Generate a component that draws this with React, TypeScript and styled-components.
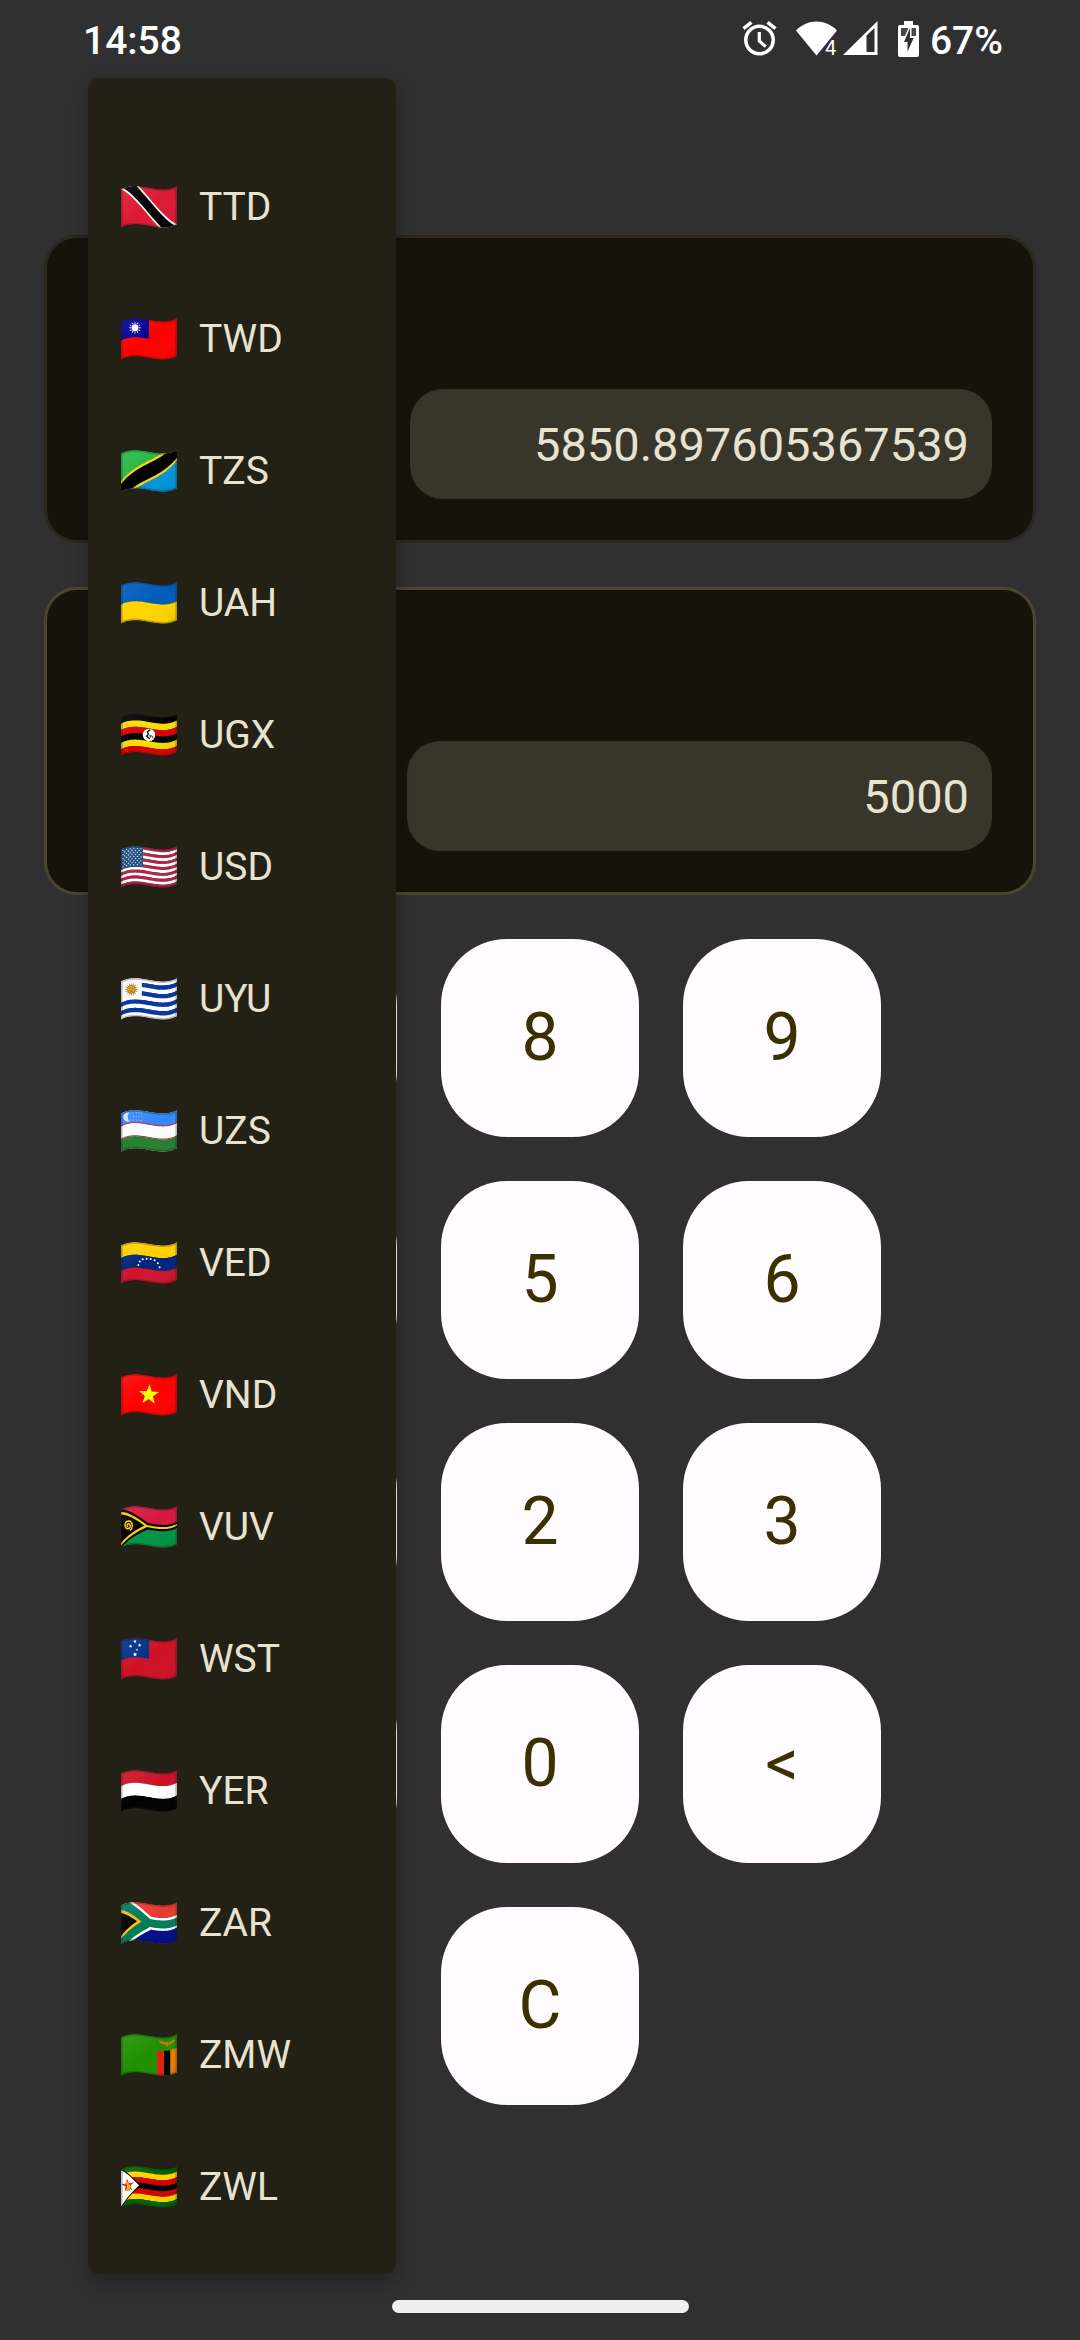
import React, { useState } from "react";
import styled, { createGlobalStyle } from "styled-components";

const color = {
  page: "#303030",
  menu: "#232015",
  card: "#16130b",
  cardEdge: "#2c281e",
  cardEdgeActive: "#4b4530",
  field: "#38352a",
  text: "#e8e2d0",
  key: "#fffbff",
  keyText: "#3a3000",
};

const GlobalStyle = createGlobalStyle`
  * { box-sizing: border-box; }
  html { background: ${color.page}; }
  body { margin: 0; font-family: Roboto, "Noto Sans", sans-serif; }
  button, input { font: inherit; }
`;

const Screen = styled.div`
  position: relative;
  display: flex;
  flex-direction: column;
  min-height: 100vh;
  background: ${color.page};
`;

const StatusBar = styled.header`
  display: flex;
  align-items: center;
  justify-content: space-between;
  height: 78px;
  padding: 0 77px 0 83px;
  color: #fff;
`;

const StatusText = styled.span`
  padding-top: 4px;
  font-size: 39px;
  line-height: 46px;
  font-weight: 500;
`;

const StatusIcons = styled.div`
  display: flex;
  align-items: center;
`;

const StatusIcon = styled.svg<{ $gap: number }>`
  display: block;
  flex: none;
  margin-right: ${(p) => p.$gap}px;
`;

const Main = styled.main`
  display: flex;
  flex-direction: column;
  gap: 44px;
  padding: 157px 44px 44px;
`;

const Card = styled.section<{ $active?: boolean }>`
  display: flex;
  align-items: flex-end;
  gap: 22px;
  min-height: 308px;
  padding: 41px;
  border: 3px solid ${(p) => (p.$active ? color.cardEdgeActive : color.cardEdge)};
  border-radius: 33px;
  background: ${color.card};
`;

const CurrencyPicker = styled.button<{ $width: number }>`
  flex: none;
  width: ${(p) => p.$width}px;
  height: 110px;
  border: 0;
  border-radius: 33px;
  background: ${color.field};
`;

const Amount = styled.input`
  flex: 1;
  min-width: 0;
  height: 110px;
  padding: 0 23px;
  border: 0;
  border-radius: 33px;
  outline: 0;
  background: ${color.field};
  color: ${color.text};
  font-size: 47px;
  line-height: 66px;
  text-align: right;
`;

const Keypad = styled.div`
  display: grid;
  grid-template-columns: repeat(3, 198px);
  justify-content: center;
  gap: 44px;
`;

const Key = styled.button<{ $column?: number }>`
  grid-column: ${(p) => p.$column ?? "auto"};
  height: 198px;
  padding: 0;
  border: 0;
  border-radius: 66px;
  background: ${color.key};
  color: ${color.keyText};
  font-size: 66px;
  line-height: 88px;
`;

const Menu = styled.ul`
  position: absolute;
  top: 78px;
  left: 88px;
  width: 308px;
  margin: 0;
  padding: 63px 0 21px;
  border-radius: 11px;
  background: ${color.menu};
  box-shadow: 0 8px 18px rgba(0, 0, 0, 0.28);
  list-style: none;
`;

const MenuItem = styled.button`
  display: flex;
  align-items: center;
  gap: 22px;
  width: 100%;
  height: 132px;
  padding: 0 33px;
  border: 0;
  background: none;
  color: ${color.text};
  font-size: 39px;
  line-height: 46px;
  text-align: left;
`;

const FlagArt = styled.svg`
  display: block;
  flex: none;
  overflow: visible;
`;

const NavArea = styled.footer`
  display: flex;
  justify-content: center;
  margin-top: auto;
  padding-bottom: 27px;
`;

const HomeHandle = styled.div`
  width: 297px;
  height: 13px;
  border-radius: 7px;
  background: #efefef;
`;

/* ---------- flags: flat shapes bent along a wave ---------- */

const W = 56;
const H = 38.4;
type Pt = [number, number];

const wave = (x: number) => 3.3 - 0.0009 * ((x * x * x) / 3 - 28 * x * x + 588 * x);

const bend = (points: Pt[]) => {
  let d = "";
  points.forEach(([x0, y0], i) => {
    const [x1, y1] = points[(i + 1) % points.length];
    const steps = Math.max(1, Math.ceil(Math.abs(x1 - x0) / 2));
    for (let s = 0; s < steps; s++) {
      const t = s / steps;
      const x = x0 + (x1 - x0) * t;
      const y = y0 + (y1 - y0) * t + wave(x);
      d += `${d ? "L" : "M"}${x.toFixed(2)} ${y.toFixed(2)}`;
    }
  });
  return d + "Z";
};

const Shape = ({ p, c }: { p: Pt[]; c: string }) => <path d={bend(p)} fill={c} />;

const Box = ({ x = 0, y = 0, w = W, h = H, c }: { x?: number; y?: number; w?: number; h?: number; c: string }) => (
  <Shape p={[[x, y], [x + w, y], [x + w, y + h], [x, y + h]]} c={c} />
);

const Stripes = ({ colors }: { colors: string[] }) => (
  <>
    {colors.map((c, i) => (
      <Box key={i} y={(i * H) / colors.length} h={H / colors.length} c={c} />
    ))}
  </>
);

const burst = (cx: number, cy: number, outer: number, inner: number, n: number) =>
  Array.from({ length: n * 2 }, (_, i) => {
    const r = i % 2 ? inner : outer;
    const a = (Math.PI * i) / n - Math.PI / 2;
    return `${(cx + r * Math.cos(a)).toFixed(2)},${(cy + r * Math.sin(a)).toFixed(2)}`;
  }).join(" ");

const Dots = ({ at, r }: { at: Pt[]; r: number }) => (
  <>
    {at.map(([x, y], i) => (
      <circle key={i} cx={x} cy={y + wave(x)} r={r} fill="#fff" />
    ))}
  </>
);

const usStars: Pt[] = Array.from({ length: 9 }).flatMap((_, row) =>
  Array.from({ length: row % 2 ? 5 : 6 }, (_, i): Pt => [2 + i * 3.6 + (row % 2 ? 1.8 : 0), 2.2 + row * 2.05]),
);

const art: Record<string, React.ReactNode> = {
  TTD: (
    <>
      <Box c="#dd1933" />
      <Shape c="#fff" p={[[0, 0], [18, 0], [W, H], [38, H]]} />
      <Shape c="#000" p={[[2.5, 0], [15.5, 0], [53.5, H], [40.5, H]]} />
    </>
  ),
  TWD: (
    <>
      <Box c="#fe0000" />
      <Box w={28} h={19.2} c="#000095" />
      <polygon points={burst(14, 9.8, 6.6, 3.4, 12)} fill="#fff" />
      <circle cx="14" cy="9.8" r="4.1" fill="#000095" />
      <circle cx="14" cy="9.8" r="3.5" fill="#fff" />
    </>
  ),
  TZS: (
    <>
      <Box c="#26b843" />
      <Shape c="#0095da" p={[[W, 0], [W, H], [0, H]]} />
      <Shape c="#fcd116" p={[[0, 28], [41, 0], [W, 0], [W, 10.4], [15, H], [0, H]]} />
      <Shape c="#000" p={[[0, 30.6], [45, 0], [W, 0], [W, 7.8], [11, H], [0, H]]} />
    </>
  ),
  UAH: <Stripes colors={["#005bbb", "#ffd500"]} />,
  UGX: (
    <>
      <Stripes colors={["#000", "#fcdc04", "#d90000", "#000", "#fcdc04", "#d90000"]} />
      <circle cx="28" cy="21" r="6.2" fill="#fff" />
      <path d="M29.4 15.6l-3 2.2 1 2.4-1.8 2 3.2 2.6" fill="none" stroke="#222" strokeWidth="1.5" />
      <path d="M27.5 20.5l3.6 1.2-1.6 2.4z" fill="#555" />
      <path d="M30.4 21.2l2 1.6-.8 2z" fill="#d90000" />
    </>
  ),
  USD: (
    <>
      <Stripes colors={Array.from({ length: 13 }, (_, i) => (i % 2 ? "#fff" : "#b22346"))} />
      <Box w={22} h={20.7} c="#1b4a7e" />
      <Dots at={usStars} r={0.62} />
    </>
  ),
  UYU: (
    <>
      <Stripes colors={Array.from({ length: 9 }, (_, i) => (i % 2 ? "#0038a8" : "#fff"))} />
      <Box w={20.8} h={21.3} c="#fff" />
      <polygon points={burst(10.4, 11.4, 7.4, 3.4, 16)} fill="#a66a12" />
      <circle cx="10.4" cy="11.4" r="3.8" fill="#e0a010" stroke="#a66a12" strokeWidth=".6" />
      <path d="M8.6 10.6h1M11.2 10.6h1M9.2 13h2.4" stroke="#85340a" strokeWidth=".7" />
    </>
  ),
  UZS: (
    <>
      <Box c="#fff" />
      <Box h={12.6} c="#3289fa" />
      <Box y={12.1} h={1} c="#e0142c" />
      <Box y={25.3} h={1} c="#e0142c" />
      <Box y={26.1} h={12.3} c="#278030" />
      <path d="M8.400 2.400a4.800 4.800 0 1 0 0 9.200 7 7 0 0 1 0-9.200z" fill="#cfe4ff" />
      <Dots
        r={0.42}
        at={[[15.5, 2.5], [18, 2.5], [20.5, 2.5], [12.6, 6.2], [15.3, 6.2], [18, 6.2], [20.5, 6.2], [9.8, 10], [12.6, 10], [15.3, 10], [18, 10], [20.5, 10]]}
      />
    </>
  ),
  VED: (
    <>
      <Stripes colors={["#ffcf00", "#00247d", "#cf142b"]} />
      <Dots r={1} at={[[17.4, 22.8], [18.8, 19.2], [21.7, 16.6], [25.6, 15.4], [29.6, 15.1], [33.6, 15.7], [36.8, 18.2], [38.6, 22]]} />
    </>
  ),
  VND: (
    <>
      <Box c="#fe0000" />
      <polygon points={burst(28, 20.8, 10.6, 4.2, 5)} fill="#ff0" transform="rotate(3 28 20.8)" />
    </>
  ),
  VUV: (
    <>
      <Box c="#d6173f" />
      <Box y={19.2} h={19.2} c="#009543" />
      <Shape c="#000" p={[[0, 0], [27, 15.6], [W, 15.6], [W, 22], [27, 22], [0, H]]} />
      <Shape c="#fdce12" p={[[0, 2.6], [26, 17.8], [W, 17.8], [W, 19.8], [26, 19.8], [0, 36.4]]} />
      <Shape c="#000" p={[[0, 5.2], [23.4, 18.8], [0, 33.6]]} />
      <path d="M9 24.4c3.4-2 3-9.2-1.2-9.4-4.6 0-5 7.4-1.2 7.8 3 .2 3.6-4.8 1-5-2 0-2 3-.4 3" fill="none" stroke="#fdce12" strokeWidth="1.4" />
    </>
  ),
  WST: (
    <>
      <Box c="#ce1126" />
      <Box w={28} h={19.2} c="#003087" />
      <polygon points={burst(14, 3.4, 1.8, 0.9, 5)} fill="#fff" />
      <polygon points={burst(9.6, 8.2, 1.8, 0.9, 5)} fill="#fff" />
      <polygon points={burst(18.6, 7.2, 1.8, 0.9, 5)} fill="#fff" />
      <polygon points={burst(16, 11.8, 1.2, 0.6, 5)} fill="#fff" />
      <polygon points={burst(14, 16.4, 2.2, 1.1, 5)} fill="#fff" />
    </>
  ),
  YER: <Stripes colors={["#ce1126", "#fff", "#000"]} />,
  ZAR: (
    <>
      <Box c="#e63b30" />
      <Box y={19.2} h={19.2} c="#000c8a" />
      <Shape c="#fff" p={[[0, 0], [12, 0], [30, 12.8], [W, 12.8], [W, 25.6], [30, 25.6], [12, H], [0, H]]} />
      <Shape c="#007c59" p={[[0, 0], [8, 0], [29, 15.2], [W, 15.2], [W, 23.2], [29, 23.2], [8, H], [0, H]]} />
      <Shape c="#ffb81c" p={[[0, 4.6], [20.6, 19.2], [0, 33.8]]} />
      <Shape c="#000" p={[[0, 7.8], [16, 19.2], [0, 30.6]]} />
    </>
  ),
  ZMW: (
    <>
      <Box c="#1f9000" />
      <Box x={36} w={7} y={13.6} h={24.8} c="#de2010" />
      <Box x={43} w={6.4} y={13.6} h={24.8} c="#000" />
      <Box x={49.4} w={6.6} y={13.6} h={24.8} c="#ef7d00" />
      <path d="M37.6 6.4c2.6.2 4.4 1.4 6.2 2l2-.6 2 .6c2-.8 4.2-2.8 6.6-3.2-.6 2.2-3 4.4-5.8 4.8l-2.6 2.8-2.4-2.6c-3-.2-5-1.6-6-3.8z" fill="#d8730e" />
    </>
  ),
  ZWL: (
    <>
      <Stripes colors={["#006400", "#ffd200", "#d40000", "#000", "#d40000", "#ffd200", "#006400"]} />
      <Shape c="#000" p={[[0, -0.4], [19.4, 19.2], [0, H + 0.4]]} />
      <Shape c="#fff" p={[[0, 1], [18, 19.2], [0, 37.4]]} />
      <polygon points={burst(6.8, 19.4, 6.6, 2.6, 5)} fill="#d8261c" transform="rotate(-8 6.8 19.4)" />
      <path d="M5 15.6l2.4 1 2.2 4.4-.8 4H5l1-4z" fill="#e0b014" />
    </>
  ),
};

const outline = bend([[0, 0], [W, 0], [W, H], [0, H]]);

const Flag = ({ code }: { code: string }) => (
  <FlagArt width="56" height="42" viewBox="0 0 56 42" aria-hidden="true">
    <defs>
      <clipPath id={`clip-${code}`}>
        <path d={outline} />
      </clipPath>
      <linearGradient id={`shade-${code}`} x1="0" y1="0" x2="1" y2="1">
        <stop offset="0" stopColor="#fff" stopOpacity=".1" />
        <stop offset=".5" stopColor="#fff" stopOpacity="0" />
        <stop offset="1" stopColor="#000" stopOpacity=".08" />
      </linearGradient>
    </defs>
    <g clipPath={`url(#clip-${code})`}>
      {art[code]}
      <path d={outline} fill={`url(#shade-${code})`} />
      <path d={outline} fill="none" stroke="#1a1a1a" strokeOpacity=".28" strokeWidth="3.4" />
    </g>
  </FlagArt>
);

/* ---------- status icons ---------- */

const AlarmIcon = () => (
  <StatusIcon $gap={19} width="35" height="36" viewBox="0 0 35 36" fill="none" stroke="#fff" aria-hidden="true">
    <circle cx="17.5" cy="19" r="13.7" strokeWidth="3.6" />
    <path d="M1.5 7.6L9.4 1.4M33.5 7.6L25.6 1.4" strokeWidth="3.6" />
    <path d="M17.3 11v9l6.4 5.6" strokeWidth="3.2" />
  </StatusIcon>
);

const WifiIcon = () => (
  <StatusIcon $gap={3} width="44" height="36" viewBox="0 0 44 36" aria-hidden="true">
    <path d="M0 9.5C12-2.4 29-2.4 41 9.5L20.500 34.500z" fill="#fff" />
    <text x="29" y="34" fontSize="20" fill="#fff" stroke={color.page} strokeWidth="3" paintOrder="stroke">
      4
    </text>
  </StatusIcon>
);

const SignalIcon = () => (
  <StatusIcon $gap={20} width="35" height="36" viewBox="0 0 35 36" aria-hidden="true">
    <path d="M0 34L34.500 0V34z M23.500 14.500V31H31.500V7z" fill="#fff" fillRule="evenodd" />
  </StatusIcon>
);

const BatteryIcon = () => (
  <StatusIcon $gap={11} width="21" height="36" viewBox="0 0 21 36" aria-hidden="true">
    <path d="M6 0h9v4h4a2 2 0 0 1 2 2v28a2 2 0 0 1-2 2H2a2 2 0 0 1-2-2V6a2 2 0 0 1 2-2h4z" fill="#fff" />
    <path d="M3 7h15v8H3z" fill="#484848" />
    <path d="M12 7L6 21h3.500v9.500L15.700 17H12z" fill={color.page} stroke="#fff" strokeWidth="3" paintOrder="stroke" />
  </StatusIcon>
);

/* ---------- screen ---------- */

const currencies = ["TTD", "TWD", "TZS", "UAH", "UGX", "USD", "UYU", "UZS", "VED", "VND", "VUV", "WST", "YER", "ZAR", "ZMW", "ZWL"];
const keys = ["7", "8", "9", "4", "5", "6", "1", "2", "3", ".", "0", "<"];

export default function App() {
  const [target, setTarget] = useState("5850.897605367539");
  const [source, setSource] = useState("5000");

  const press = (key: string) => {
    if (key === "C") setSource("0");
    else if (key === "<") setSource((v) => v.slice(0, -1) || "0");
    else setSource((v) => (v === "0" && key !== "." ? key : v + key));
  };

  return (
    <Screen>
      <GlobalStyle />
      <StatusBar>
        <StatusText>14:58</StatusText>
        <StatusIcons>
          <AlarmIcon />
          <WifiIcon />
          <SignalIcon />
          <BatteryIcon />
          <StatusText>67%</StatusText>
        </StatusIcons>
      </StatusBar>
      <Main>
        <Card>
          <CurrencyPicker $width={300} aria-label="Target currency" />
          <Amount aria-label="Target amount" value={target} onChange={(e) => setTarget(e.target.value)} />
        </Card>
        <Card $active>
          <CurrencyPicker $width={297} aria-label="Source currency" />
          <Amount aria-label="Source amount" value={source} onChange={(e) => setSource(e.target.value)} />
        </Card>
        <Keypad>
          {keys.map((k) => (
            <Key key={k} onClick={() => press(k)}>
              {k}
            </Key>
          ))}
          <Key $column={2} onClick={() => press("C")}>
            C
          </Key>
        </Keypad>
      </Main>
      <Menu aria-label="Currencies">
        {currencies.map((code) => (
          <li key={code}>
            <MenuItem>
              <Flag code={code} />
              <span>{code}</span>
            </MenuItem>
          </li>
        ))}
      </Menu>
      <NavArea>
        <HomeHandle />
      </NavArea>
    </Screen>
  );
}
